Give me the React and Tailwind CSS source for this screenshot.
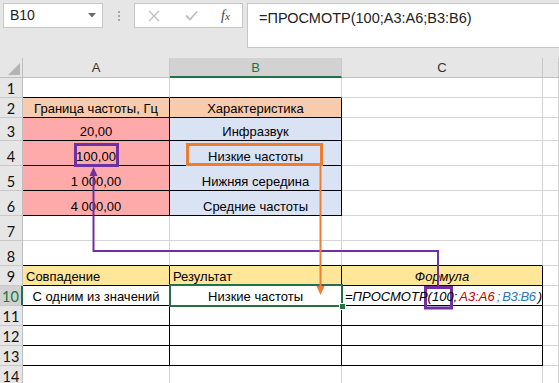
import React from "react";

const FONT = { fontFamily: '"Liberation Sans", Arial, sans-serif' };
const NUM_FONT = { fontFamily: 'Lato, "Open Sans", sans-serif' };

const ROWS = [
  { n: "1", h: "h-[20px]" },
  { n: "2", h: "h-[20px]" },
  { n: "3", h: "h-[23px]" },
  { n: "4", h: "h-[25px]" },
  { n: "5", h: "h-[25px]" },
  { n: "6", h: "h-[25px]" },
  { n: "7", h: "h-[25px]" },
  { n: "8", h: "h-[25px]" },
  { n: "9", h: "h-[20px]" },
  { n: "10", h: "h-[20px]" },
  { n: "11", h: "h-[20px]" },
  { n: "12", h: "h-[20px]" },
  { n: "13", h: "h-[20px]" },
  { n: "14", h: "h-[20px]" },
];

const COLS = [
  { id: "A", w: "w-[147px]" },
  { id: "B", w: "w-[172px]" },
  { id: "C", w: "w-[201px]" },
  { id: "D", w: "flex-1" },
];

const CELLS = {
  A2: { text: "Граница частоты, Гц", bg: "bg-[#f8cbad]" },
  B2: { text: "Характеристика", bg: "bg-[#f8cbad]" },
  A3: { text: "20,00", bg: "bg-[#ffaaaa]" },
  A4: { text: "100,00", bg: "bg-[#ffaaaa]" },
  A5: { text: "1 000,00", bg: "bg-[#ffaaaa]" },
  A6: { text: "4 000,00", bg: "bg-[#ffaaaa]" },
  B3: { text: "Инфразвук", bg: "bg-[#dae3f3]" },
  B4: { text: "Низкие частоты", bg: "bg-[#dae3f3]" },
  B5: { text: "Нижняя середина", bg: "bg-[#dae3f3]" },
  B6: { text: "Средние частоты", bg: "bg-[#dae3f3]" },
  A9: { text: "Совпадение", bg: "bg-[#ffe699]", left: true },
  B9: { text: "Результат", bg: "bg-[#ffe699]", left: true },
  C9: { text: "Формула", bg: "bg-[#ffe699]", italic: true },
  A10: { text: "С одним из значений" },
  B10: { text: "Низкие частоты" },
  C10: { formula: true, left: true },
};

// black table borders: A2:B6 and A9:C13
function inTable(col, row) {
  if (row >= 2 && row <= 6 && (col === "A" || col === "B")) return true;
  if (row >= 9 && row <= 13 && col !== "D") return true;
  return false;
}

function Cell({ col, row }) {
  const cell = CELLS[col.id + row] || {};
  const black = inTable(col.id, row);
  const bottomBlack = black || inTable(col.id, row + 1);

  return (
    <div
      className={`${col.w} shrink-0 h-full flex items-end border-r border-b px-[3px] pb-[1px] whitespace-nowrap ${
        black ? "border-r-black" : "border-r-[#d4d4d4]"
      } ${bottomBlack ? "border-b-black" : "border-b-[#d4d4d4]"} ${
        cell.bg || "bg-white"
      } ${cell.left ? "justify-start" : "justify-center"} ${
        cell.italic ? "italic" : ""
      }`}
    >
      {cell.formula ? (
        <span className="italic relative z-10">
          =ПРОСМОТР(100;<span className="text-[#c00000] ml-[2px]">A3:A6</span>
          <span className="text-[#2f75b5] ml-[2px]">;</span>
          <span className="text-[#2f75b5] ml-[2px] tracking-[-0.4px]">B3:B6</span>
          <span className="ml-[2px]">)</span>
        </span>
      ) : (
        <span>{cell.text}</span>
      )}
    </div>
  );
}

function FormulaBar() {
  return (
    <div className="h-[58px] bg-[#e6e6e6] flex items-start pt-[3px] pl-[3px]">
      <div className="w-[100px] h-[25px] bg-white border border-[#c6c6c6] flex items-center justify-between pl-[6px] pr-[6px]">
        <span className="text-[14px] text-[#222]">B10</span>
        <svg width="8" height="5" viewBox="0 0 8 5">
          <path d="M0 0 H8 L4 4.5 Z" fill="#6b6b6b" />
        </svg>
      </div>
      <div className="w-[31px] h-[25px] flex flex-col items-center justify-center gap-[2px]">
        <span className="w-[2px] h-[2px] bg-[#a6a6a6]" />
        <span className="w-[2px] h-[2px] bg-[#a6a6a6]" />
        <span className="w-[2px] h-[2px] bg-[#a6a6a6]" />
      </div>
      <div className="w-[109px] h-[25px] bg-white border border-[#c6c6c6] flex items-center">
        <svg className="ml-[13px]" width="12" height="12" viewBox="0 0 12 12">
          <path d="M1 1 L11 11 M11 1 L1 11" stroke="#bdbdbd" strokeWidth="1.4" />
        </svg>
        <svg className="ml-[25px]" width="13" height="11" viewBox="0 0 13 11">
          <path d="M1 5.5 L5 9.5 L12 1.5" stroke="#bdbdbd" strokeWidth="1.8" fill="none" />
        </svg>
        <span
          className="ml-[23px] text-[14px] italic text-[#444]"
          style={{ fontFamily: '"Liberation Serif", serif' }}
        >
          f<span className="text-[11px]">x</span>
        </span>
      </div>
      <div className="flex-1 ml-[4px] h-[45px] bg-white border-y border-l border-[#c6c6c6] pl-[11px] pt-[6px] text-[14.5px] leading-[17px] text-[#222]">
        =ПРОСМОТР(100;A3:A6;B3:B6)
      </div>
    </div>
  );
}

function RowHeader({ n }) {
  const active = n === "10";
  return (
    <div
      className={`w-[23px] shrink-0 h-full flex flex-col justify-end border-b border-b-[#c8c8c8] ${
        active
          ? "bg-[#d2d2d2] text-[#217346] border-r-2 border-r-[#217346]"
          : "bg-[#e6e6e6] text-[#111] border-r border-r-[#bfbfbf]"
      }`}
    >
      <div className="text-center text-[14.5px] leading-[17px]" style={NUM_FONT}>
        {n}
      </div>
    </div>
  );
}

function Sheet() {
  return (
    <div className="text-[13px] leading-[15px] text-black">
      <div className="flex h-[20px] bg-[#e6e6e6]">
        <div className="w-[23px] h-full border-r border-b border-[#bfbfbf] relative">
          <svg className="absolute right-[2px] bottom-[2px]" width="12" height="12" viewBox="0 0 12 12">
            <path d="M12 0 V12 H0 Z" fill="#b4b4b4" />
          </svg>
        </div>
        {COLS.map((c) => (
          <div
            key={c.id}
            className={`${c.w} shrink-0 h-full flex items-center justify-center border-r border-[#c8c8c8] ${
              c.id === "B"
                ? "bg-[#d2d2d2] text-[#217346] border-b-2 border-b-[#217346]"
                : "text-[#333] border-b border-b-[#bfbfbf]"
            }`}
          >
            {c.id === "D" ? "" : c.id}
          </div>
        ))}
      </div>
      {ROWS.map((r) => (
        <div key={r.n} className={`flex ${r.h}`}>
          <RowHeader n={r.n} />
          {COLS.map((c) => (
            <Cell key={c.id} col={c} row={Number(r.n)} />
          ))}
        </div>
      ))}
    </div>
  );
}

export default function App() {
  return (
    <div className="relative w-[559px] h-[383px] overflow-hidden bg-white" style={FONT}>
      <FormulaBar />
      <Sheet />

      {/* selected cell B10 */}
      <div className="absolute left-[169px] top-[284px] w-[174px] h-[23px] border-2 border-[#217346] pointer-events-none" />
      <div className="absolute left-[339px] top-[303px] w-[7px] h-[7px] bg-[#217346] border border-white pointer-events-none" />

      {/* annotations */}
      <svg
        className="absolute left-0 top-0 pointer-events-none"
        width="559"
        height="383"
        viewBox="0 0 559 383"
      >
        <rect x="75.5" y="144.5" width="42" height="21" fill="none" stroke="#7030a0" strokeWidth="3" />
        <path d="M93.5 174 V251 H438 V286" fill="none" stroke="#7030a0" strokeWidth="2" />
        <path d="M93.5 167 L89.5 176 H97.5 Z" fill="#7030a0" />
        <rect x="425.5" y="287.5" width="26" height="20.5" fill="none" stroke="#7030a0" strokeWidth="3" />

        <rect x="187.5" y="144.5" width="134" height="20" fill="none" stroke="#ed7d31" strokeWidth="3" />
        <path d="M320.5 166 V287" fill="none" stroke="#ed7d31" strokeWidth="2" />
        <path d="M320.5 295 L316.5 286 H324.5 Z" fill="#ed7d31" />
      </svg>
    </div>
  );
}
